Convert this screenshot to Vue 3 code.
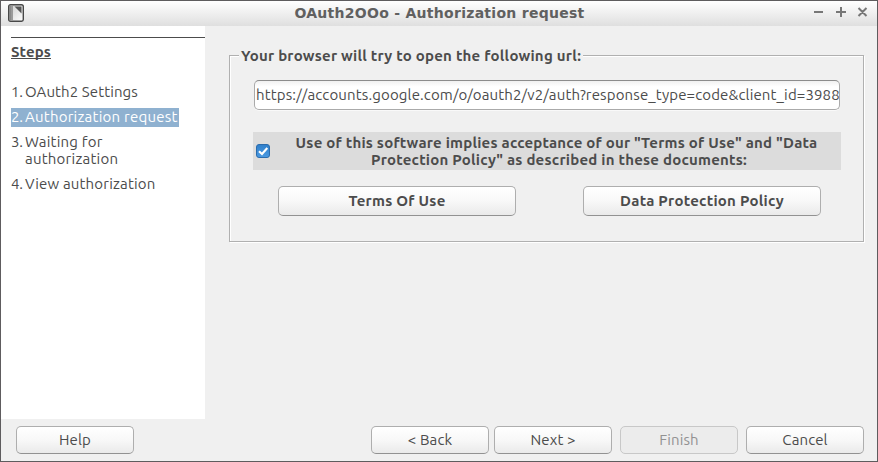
<script setup>
const steps = [
  { label: 'OAuth2 Settings' },
  { label: 'Authorization request', current: true },
  { label: 'Waiting for authorization' },
  { label: 'View authorization' },
]
const url = 'https://accounts.google.com/o/oauth2/v2/auth?response_type=code&client_id=3988'
</script>

<template>
  <div class="window">
    <header class="titlebar">
      <svg class="app-icon" width="16" height="18" viewBox="0 0 16 18">
        <defs>
          <linearGradient id="spine"><stop offset="0" stop-color="#777" /><stop offset="1" stop-color="#aaa" /></linearGradient>
          <linearGradient id="page" x2="1" y2="1"><stop offset="0" stop-color="#ccc" /><stop offset="1" stop-color="#fff" /></linearGradient>
        </defs>
        <rect x=".7" y=".7" width="14.6" height="16.6" rx="1.8" fill="url(#page)" stroke="#484848" stroke-width="1.4" />
        <path d="M1.4 1.4H4.5V16.6H1.4Z" fill="url(#spine)" />
        <path d="M4.5 1.4V16.6" stroke="#888" stroke-width=".7" />
        <path d="M6.5 2.5H13.5V9.5Z" fill="#555" />
      </svg>
      <h1>OAuth2OOo - Authorization request</h1>
      <svg class="controls" width="56" height="12" viewBox="0 0 56 12" fill="none" stroke="#777" stroke-width="2">
        <path d="M1 6H10M23 6H33M28 1V11M45.5 2L53.5 10M53.5 2L45.5 10" />
      </svg>
    </header>

    <div class="body">
      <aside>
        <div class="rule"></div>
        <h2>Steps</h2>
        <ol>
          <li v-for="(s, i) in steps" :key="i" :class="{ current: s.current }">
            <span class="num">{{ i + 1 }}.</span><span class="label">{{ s.label }}</span>
          </li>
        </ol>
      </aside>
      <main>
        <fieldset>
          <legend>Your browser will try to open the following url:</legend>
          <div class="field"><span>{{ url }}</span></div>
          <div class="consent">
            <svg width="14" height="14" viewBox="0 0 14 14">
              <defs><linearGradient id="check" x2="0" y2="1"><stop offset="0" stop-color="#2f7fca" /><stop offset="1" stop-color="#4a9ae2" /></linearGradient></defs>
              <rect x=".5" y=".5" width="13" height="13" rx="2.5" fill="url(#check)" stroke="#2b6cad" />
              <path d="M3 7.2L6 10L11.3 4" fill="none" stroke="#fff" stroke-width="2.1" />
            </svg>
            <p>Use of this software implies acceptance of our "Terms of Use" and "Data<br><span class="second">Protection Policy" as described in these documents:</span></p>
          </div>
          <div class="docs">
            <button>Terms Of Use</button>
            <button>Data Protection Policy</button>
          </div>
        </fieldset>
      </main>
    </div>

    <footer>
      <button class="help">Help</button>
      <button>&lt; Back</button>
      <button class="next">Next &gt;</button>
      <button class="finish" disabled>Finish</button>
      <button class="cancel">Cancel</button>
    </footer>
  </div>
</template>

<style>
body { margin: 0; }
</style>

<style scoped>
* { box-sizing: border-box; }
.window { width: 878px; height: 462px; border: 1px solid #5e5c5e; background: #f0f0f0; color: #4c4c4c; font: 15px/17px Ubuntu, "Noto Sans", sans-serif; letter-spacing: .18px; display: flex; flex-direction: column; overflow: hidden; white-space: nowrap; }
.titlebar { height: 25px; flex: none; display: flex; align-items: center; background: linear-gradient(#fff, #dfdfdf); padding: 0 8px 0 7px; }
.app-icon { margin-top: -1px; }
h1 { flex: 1; margin: 0 0 0 42px; text-align: center; font: bold 14px/17px "DejaVu Sans", sans-serif; letter-spacing: .28px; color: #606060; }
.controls { margin-top: -4px; }
.body { display: flex; height: 393px; flex: none; }
aside { flex: none; width: 204px; background: #fff; padding: 11px 0 0 10px; }
.rule { height: 1px; background: #4c4c4c; }
h2 { margin: 5px 0 0; font-size: 15px; line-height: 17px; height: 16px; width: max-content; border-bottom: 1px solid #4c4c4c; letter-spacing: .1px; }
ol { list-style: none; margin: 24px 0 0; padding: 0; display: flex; flex-direction: column; align-items: flex-start; gap: 6px; }
li { display: flex; padding: 0 1px 2px 0; }
li:first-child .label { letter-spacing: .1px; }
.label { white-space: normal; max-width: 160px; }
li:nth-child(3) .label { max-width: 110px; letter-spacing: .22px; }
.num { width: 14px; letter-spacing: -.2px; }
.current { background: #8fb1d0; color: #fff; letter-spacing: .23px; }
main { flex: 1; min-width: 0; padding: 21px 0 0 24px; }
fieldset { margin: 0; min-width: 0; height: 195px; width: 635px; padding: 16px 23px 0 24px; border: 1px solid #b0b0b0; box-shadow: inset 1px 1px #fff, 1px 1px #fff; }
legend { margin-left: -15px; padding: 0 2px; height: 17px; font-weight: bold; letter-spacing: .23px; background: #f0f0f0; }
.field { width: 586px; height: 30px; border: 1px solid #aaa; border-top-color: #8c8c8c; border-radius: 5px; background: linear-gradient(#f1f1f1, #fff 20%); box-shadow: 0 1px #f9f9f9; overflow: hidden; padding: 5px 0 0 1px; letter-spacing: .14px; }
.consent { width: 588px; height: 38px; margin-top: 22px; margin-left: -1px; background: #dcdcdc; display: flex; align-items: center; padding-left: 3px; }
.consent p { margin: 0; flex: 1; font-weight: bold; text-align: center; padding-left: 2px; letter-spacing: .22px; }
.second { padding-left: 5px; letter-spacing: .23px; }
.docs { display: flex; justify-content: space-between; padding: 16px 19px 0 24px; }
button { flex: none; font: inherit; letter-spacing: inherit; color: inherit; width: 118px; height: 28px; margin: 0; padding: 0 0 1px; border: 1px solid #aeaeae; border-bottom-color: #929292; border-radius: 5px; background: linear-gradient(#fff, #f8f8f8 50%, #eaeaea); white-space: nowrap; }
.docs button { width: 238px; height: 30px; padding: 0 0 2px; font-weight: bold; letter-spacing: .25px; }
footer { display: flex; padding: 7px 0 0 15px; letter-spacing: .12px; }
.help { margin-right: 237px; }
.next { margin-left: 5px; }
.finish, .cancel { margin-left: 8px; }
button:disabled { color: #929292; background: #ececec; border-color: #c8c8c8; }
</style>
